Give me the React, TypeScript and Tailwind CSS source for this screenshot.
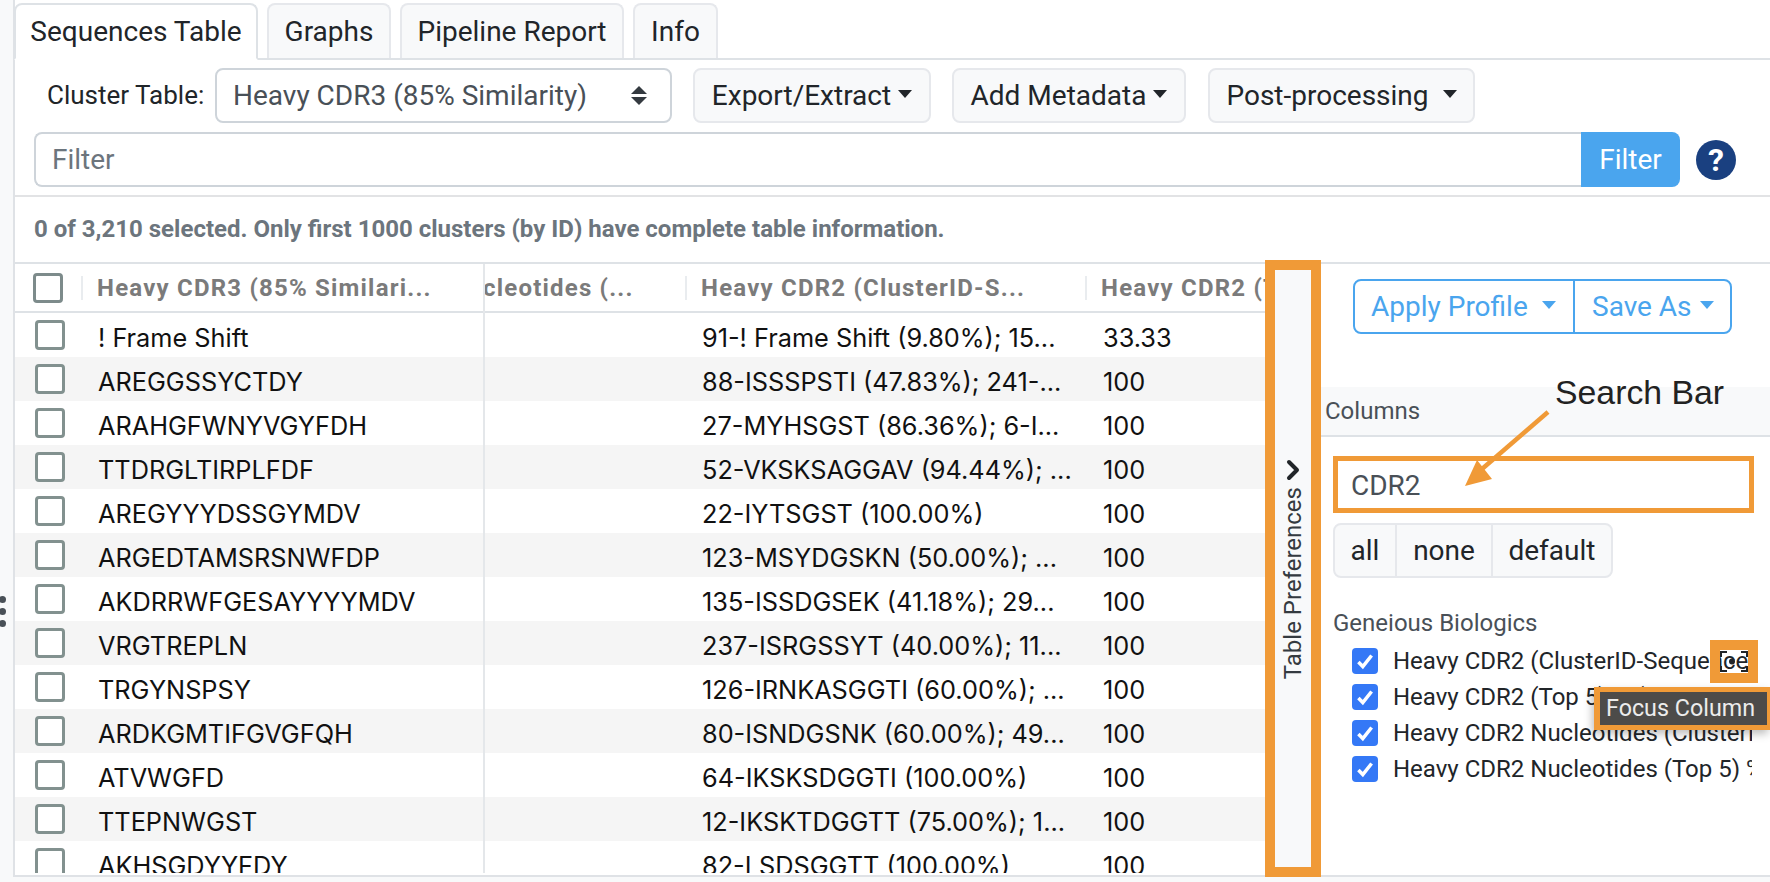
import React from "react";
import { ChevronRight } from "lucide-react";

const rows = [
  ["! Frame Shift", "91-! Frame Shift (9.80%); 15...", "33.33"],
  ["AREGGSSYCTDY", "88-ISSSPSTI (47.83%); 241-...", "100"],
  ["ARAHGFWNYVGYFDH", "27-MYHSGST (86.36%); 6-I...", "100"],
  ["TTDRGLTIRPLFDF", "52-VKSKSAGGAV (94.44%); ...", "100"],
  ["AREGYYYDSSGYMDV", "22-IYTSGST (100.00%)", "100"],
  ["ARGEDTAMSRSNWFDP", "123-MSYDGSKN (50.00%); ...", "100"],
  ["AKDRRWFGESAYYYYMDV", "135-ISSDGSEK (41.18%); 29...", "100"],
  ["VRGTREPLN", "237-ISRGSSYT (40.00%); 11...", "100"],
  ["TRGYNSPSY", "126-IRNKASGGTI (60.00%); ...", "100"],
  ["ARDKGMTIFGVGFQH", "80-ISNDGSNK (60.00%); 49...", "100"],
  ["ATVWGFD", "64-IKSKSDGGTI (100.00%)", "100"],
  ["TTEPNWGST", "12-IKSKTDGGTT (75.00%); 1...", "100"],
  ["AKHSGDYYFDY", "82-LSDSGGTT (100.00%)", "100"],
];

const columnsList = [
  "Heavy CDR2 (ClusterID-Sequence)",
  "Heavy CDR2 (Top 5) % (Top Match)",
  "Heavy CDR2 Nucleotides (ClusterID-Sequence)",
  "Heavy CDR2 Nucleotides (Top 5) % (Top Match)",
];

const Caret = ({ className }: { className: string }) => (
  <span className={`inline-block h-0 w-0 border-x-[7px] border-t-[8px] border-x-transparent ${className}`} />
);

const Tab = ({ label, active, className }: { label: string; active?: boolean; className: string }) => (
  <div
    className={`flex items-center justify-center rounded-t-[8px] border-2 text-[28px] text-[#212529] ${
      active ? "-mb-[2px] h-[57px] border-[#dee2e6] border-b-white bg-white" : "h-[55px] border-[#e6e8ec] border-b-0 bg-[#f8f9fa]"
    } ${className}`}
  >
    {label}
  </div>
);

const ToolButton = ({ label, className, gap }: { label: string; className: string; gap: string }) => (
  <button className={`flex h-[55px] items-center justify-center rounded-[8px] border-2 border-[#e6e8ec] bg-[#f8f9fa] text-[28px] text-[#212529] ${className}`}>
    {label}
    <Caret className={`border-t-[#212529] ${gap} -mt-1`} />
  </button>
);

export default function App() {
  return (
    <div className="relative flex h-[882px] w-[1770px] overflow-hidden bg-[#f8f9fa] font-['Roboto',sans-serif]">
      {/* splitter handle */}
      <div className="flex w-[13px] shrink-0 flex-col gap-[5px] pt-[596px]">
        <span className="-ml-[1px] h-[7px] w-[7px] rounded-full bg-[#495057]" />
        <span className="-ml-[1px] h-[7px] w-[7px] rounded-full bg-[#495057]" />
        <span className="-ml-[1px] h-[7px] w-[7px] rounded-full bg-[#495057]" />
      </div>

      <div className="flex h-[877px] flex-1 flex-col border-b-2 border-l-2 border-[#dfe2e6] bg-white">
        {/* tabs */}
        <div className="flex h-[60px] shrink-0 items-end border-b-2 border-[#dee2e6] pt-[4px]">
          <Tab label="Sequences Table" active className="-ml-[1px] w-[244px]" />
          <Tab label="Graphs" className="ml-[9px] w-[124px]" />
          <Tab label="Pipeline Report" className="ml-[9px] w-[224px]" />
          <Tab label="Info" className="ml-[9px] w-[85px]" />
        </div>

        {/* toolbar */}
        <div className="mt-[8px] flex h-[55px] shrink-0 items-center pl-[32px]">
          <span className="w-[168px] text-[26px] text-[#212529]">Cluster Table:</span>
          <div className="flex h-[55px] w-[457px] items-center justify-between rounded-[8px] border-2 border-[#ced4da] bg-white pl-[16px] pr-[23px] text-[28px] text-[#495057]">
            <span>Heavy CDR3 (85% Similarity)</span>
            <span className="flex flex-col gap-[3px]">
              <span className="h-0 w-0 border-x-[8px] border-b-[8px] border-x-transparent border-b-[#343a40]" />
              <span className="h-0 w-0 border-x-[8px] border-t-[8px] border-x-transparent border-t-[#343a40]" />
            </span>
          </div>
          <ToolButton label="Export/Extract" className="ml-[21px] w-[238px]" gap="ml-[7px]" />
          <ToolButton label="Add Metadata" className="ml-[21px] w-[234px]" gap="ml-[7px]" />
          <ToolButton label="Post-processing" className="ml-[22px] w-[267px]" gap="ml-[14px]" />
        </div>

        {/* filter */}
        <div className="mt-[9px] flex h-[55px] shrink-0 items-center pl-[19px]">
          <div className="flex h-full w-[1547px] items-center rounded-l-[8px] border-2 border-r-0 border-[#ced4da] bg-white pl-[16px] text-[28px] text-[#6c757d]">
            Filter
          </div>
          <button className="h-full w-[99px] rounded-r-[8px] bg-[#4aa5ee] text-[28px] text-white">Filter</button>
          <span className="ml-[16px] flex h-[40px] w-[40px] items-center justify-center rounded-full bg-[#1a4080] text-[32px] font-bold text-white">
            ?
          </span>
        </div>

        <div className="mt-[8px] h-[2px] shrink-0 bg-[#e2e3e5]" />

        <div className="flex h-[65px] shrink-0 items-center pb-[2px] pl-[19px] text-[24px] font-bold text-[#6c757d]">
          0 of 3,210 selected. Only first 1000 clusters (by ID) have complete table information.
        </div>

        <div className="flex flex-1 border-t-2 border-[#dee2e6]">
          {/* table */}
          <div className="relative h-[609px] w-[1250px] shrink-0 overflow-hidden">
            <div className="flex h-[49px] items-center whitespace-nowrap border-b-2 border-[#dee2e6] text-[24px] font-bold tracking-[1.2px] text-[#7b7b7b]">
              <div className="flex h-[24px] w-[68px] items-center border-r-2 border-[#e9ecef] pl-[18px]">
                <span className="h-[30px] w-[30px] shrink-0 rounded-[4px] border-[3px] border-[#7d8b8b] bg-white" />
              </div>
              <div className="w-[400px] pl-[14px]">Heavy CDR3 (85% Similari...</div>
              <div className="flex h-[24px] w-[204px] items-center border-r-2 border-[#e9ecef]">cleotides (...</div>
              <div className="w-[400px] border-r-2 border-[#e9ecef] pl-[14px]">
                <span className="block h-[24px] leading-[24px]">Heavy CDR2 (ClusterID-S...</span>
              </div>
              <div className="w-[178px] overflow-hidden pl-[14px]">Heavy CDR2 (Top 5)</div>
            </div>
            {rows.map((row, i) => (
              <div
                key={row[0]}
                className={`flex h-[44px] items-center font-['Inter',sans-serif] text-[25.3px] text-[#111] ${i % 2 === 1 ? "bg-[#f5f5f5]" : "bg-white"}`}
              >
                <div className="w-[68px] pl-[20px]">
                  <span className="block h-[30px] w-[30px] rounded-[4px] border-[3px] border-[#82918f] bg-white" />
                </div>
                <div className="w-[400px] pl-[15px] pt-[5px]">{row[0]}</div>
                <div className="h-full w-[204px]" />
                <div className="w-[400px] pl-[15px] pt-[5px]">{row[1]}</div>
                <div className="w-[178px] pl-[16px] pt-[5px]">{row[2]}</div>
              </div>
            ))}
            <div className="absolute bottom-0 left-[468px] top-0 w-[2px] bg-[#e4e7ea]" />
          </div>

          {/* table preferences toggle */}
          <div className="relative z-10 -mb-[2px] -mt-[4px] flex h-[617px] w-[56px] shrink-0 flex-col items-center border-[10px] border-[#f09a37] bg-[#f8f9fa] pt-[184px]">
            <ChevronRight size={32} strokeWidth={3} className="text-[#212529]" />
            <span className="mt-[1px] rotate-180 text-[24px] leading-[30px] text-[#343a40] [writing-mode:vertical-rl]">Table Preferences</span>
          </div>

          {/* right panel */}
          <div className="flex min-w-0 flex-1 flex-col pt-[15px]">
            <div className="ml-[32px] flex h-[55px] w-[379px] rounded-[8px] border-2 border-[#4aa5ee] text-[28px] text-[#4aa5ee]">
              <div className="flex w-[220px] items-center border-r-2 border-[#4aa5ee] pl-[16px]">
                Apply Profile
                <Caret className="ml-[14px] -mt-1 border-t-[#4aa5ee]" />
              </div>
              <div className="flex flex-1 items-center pl-[17px]">
                Save As
                <Caret className="ml-[8px] -mt-1 border-t-[#4aa5ee]" />
              </div>
            </div>
            <div className="mt-[53px] flex h-[50px] items-center border-b-2 border-[#dee2e6] bg-[#f8f9fa] pl-[4px] text-[24px] text-[#495057]">
              Columns
            </div>
            <div className="ml-[12px] mt-[19px] flex h-[57px] w-[421px] items-center border-[5px] border-[#f09a37] bg-white pl-[13px] pt-[2px] text-[28px] text-[#495057]">
              CDR2
            </div>
            <div className="ml-[12px] mt-[10px] flex h-[55px] w-[280px] rounded-[8px] border-2 border-[#e6e8ec] bg-[#f8f9fa] text-[28px] text-[#212529]">
              <div className="flex w-[62px] items-center justify-center border-r-2 border-[#e6e8ec]">all</div>
              <div className="flex w-[96px] items-center justify-center border-r-2 border-[#e6e8ec]">none</div>
              <div className="flex flex-1 items-center justify-center">default</div>
            </div>
            <div className="ml-[12px] mt-[32px] text-[24px] leading-[26px] text-[#495057]">Geneious Biologics</div>
            <div className="ml-[31px] mt-[12px] flex w-[400px] flex-col gap-[10px]">
              {columnsList.map((label) => (
                <div key={label} className="flex h-[26px] items-center overflow-hidden whitespace-nowrap text-[24px] text-[#212529]">
                  <span className="flex h-[26px] w-[26px] shrink-0 items-center justify-center rounded-[4px] bg-[#3478f6]">
                    <svg viewBox="0 0 20 20" className="h-[22px] w-[22px]" fill="none" stroke="white" strokeWidth="3.2">
                      <path d="M4 11 L8 15 L16 5" />
                    </svg>
                  </span>
                  <span className="ml-[15px]">{label}</span>
                </div>
              ))}
            </div>
          </div>
        </div>
      </div>

      {/* annotations */}
      <div className="absolute left-[1555px] top-[372px] z-20 font-['Liberation_Sans',sans-serif] text-[33.8px] leading-[40px] text-[#222]">
        Search Bar
      </div>
      <svg className="absolute left-[1455px] top-[405px] z-20 h-[90px] w-[100px]" viewBox="0 0 100 90">
        <path d="M93 7 L27 64" stroke="#f09a37" strokeWidth="4.5" fill="none" />
        <path d="M10 81 L37 74 L22 55 Z" fill="#f09a37" />
      </svg>
      <div className="absolute left-[1710px] top-[640px] z-20 h-[43px] w-[48px] border-[10px] border-[#f09a37]" />
      <svg className="absolute left-[1720px] top-[650px] z-20 h-[23px] w-[28px]" viewBox="0 0 28 23" fill="none" stroke="#212529" strokeWidth="2">
        <path d="M1 7 V2 H7 M21 2 H27 V7 M27 16 V21 H21 M7 21 H1 V16" />
        <circle cx="12" cy="11.5" r="3" fill="#212529" stroke="none" />
      </svg>
      <div className="absolute left-[1594px] top-[687px] z-20 flex h-[43px] w-[176px] items-center whitespace-nowrap border-y-[5px] border-l-[6px] border-r-[3px] border-[#f09a37] bg-[#4d4b49] pl-[6px] text-[23.3px] text-[#ececec] shadow-[-2px_4px_8px_rgba(0,0,0,0.25)]">
        Focus Column
      </div>
    </div>
  );
}
